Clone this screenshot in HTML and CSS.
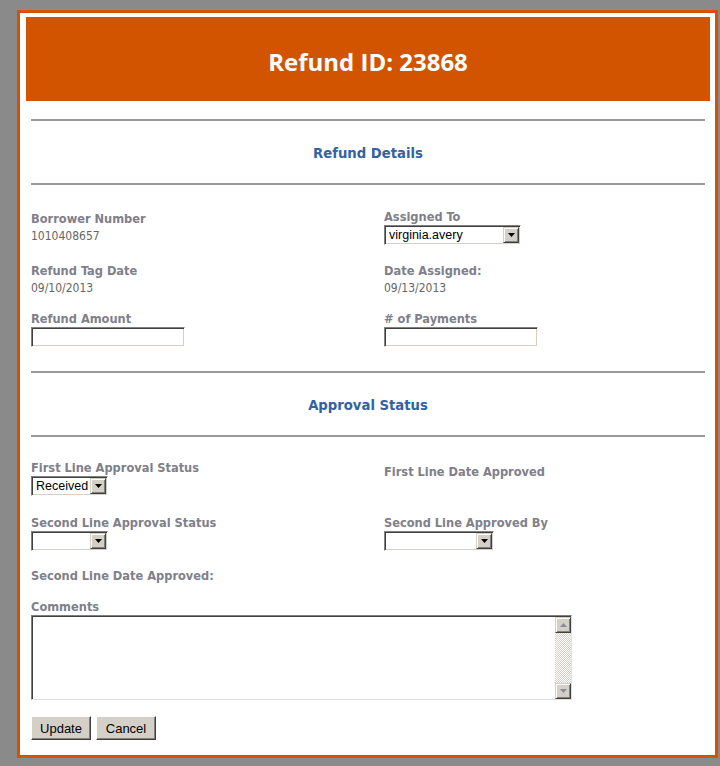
FILE: index.html
```html
<!DOCTYPE html>
<html>
<head>
<meta charset="utf-8">
<title>Refund ID: 23868</title>
<link rel="stylesheet" href="styles.css">
</head>
<body>
<div class="frame">
  <div class="header">Refund ID: 23868</div>
  <div class="content">
    <div class="section">
      <div class="rule"></div>
      <h2 class="section-title">Refund Details</h2>
      <div class="rule"></div>
    </div>

    <div class="row row1">
      <div class="cell">
        <div class="label">Borrower Number</div>
        <div class="value">1010408657</div>
      </div>
      <div class="cell">
        <div class="label">Assigned To</div>
        <div class="sel sel-assigned"><span class="sel-text">virginia.avery</span><span class="sel-btn"><svg width="7" height="4" viewBox="0 0 7 4"><polygon points="0,0 7,0 3.5,4" fill="#000"/></svg></span></div>
      </div>
    </div>

    <div class="row row2">
      <div class="cell">
        <div class="label">Refund Tag Date</div>
        <div class="value">09/10/2013</div>
      </div>
      <div class="cell">
        <div class="label">Date Assigned:</div>
        <div class="value">09/13/2013</div>
      </div>
    </div>

    <div class="row row3">
      <div class="cell">
        <div class="label">Refund Amount</div>
        <div class="inp"></div>
      </div>
      <div class="cell">
        <div class="label"># of Payments</div>
        <div class="inp"></div>
      </div>
    </div>

    <div class="section section2">
      <div class="rule"></div>
      <h2 class="section-title">Approval Status</h2>
      <div class="rule"></div>
    </div>

    <div class="row row4">
      <div class="cell">
        <div class="label">First Line Approval Status</div>
        <div class="sel sel-small"><span class="sel-text">Received</span><span class="sel-btn"><svg width="7" height="4" viewBox="0 0 7 4"><polygon points="0,0 7,0 3.5,4" fill="#000"/></svg></span></div>
      </div>
      <div class="cell cell-top">
        <div class="label">First Line Date Approved</div>
      </div>
    </div>

    <div class="row row5">
      <div class="cell">
        <div class="label">Second Line Approval Status</div>
        <div class="sel sel-small"><span class="sel-text"></span><span class="sel-btn"><svg width="7" height="4" viewBox="0 0 7 4"><polygon points="0,0 7,0 3.5,4" fill="#000"/></svg></span></div>
      </div>
      <div class="cell">
        <div class="label">Second Line Approved By</div>
        <div class="sel sel-mid"><span class="sel-text"></span><span class="sel-btn"><svg width="7" height="4" viewBox="0 0 7 4"><polygon points="0,0 7,0 3.5,4" fill="#000"/></svg></span></div>
      </div>
    </div>

    <div class="row6">
      <div class="label">Second Line Date Approved:</div>
    </div>

    <div class="comments">
      <div class="label">Comments</div>
      <div class="textbox">
        <textarea class="textarea"></textarea>
        <div class="scrollbar">
          <div class="sb-btn"><svg width="7" height="4" viewBox="0 0 7 4"><polygon points="0,4 7,4 3.5,0" fill="#8c8c94"/></svg></div>
          <div class="sb-track"></div>
          <div class="sb-btn"><svg width="7" height="4" viewBox="0 0 7 4"><polygon points="0,0 7,0 3.5,4" fill="#8c8c94"/></svg></div>
        </div>
      </div>
    </div>

    <div class="buttons">
      <button class="btn" type="button">Update</button>
      <button class="btn" type="button">Cancel</button>
    </div>
  </div>
</div>
</body>
</html>
```

FILE: styles.css
```css
html, body {
  margin: 0;
  padding: 0;
}
body {
  background: #8a8a8a;
  width: 720px;
  height: 766px;
  overflow: hidden;
}
.frame {
  margin: 10px 0 0 17px;
  border: 3px solid #d35400;
  background: #fff;
  padding: 4px 5px 15px 6px;
  box-sizing: content-box;
  width: 684px;
}
.header {
  height: 84px;
  box-sizing: border-box;
  padding-top: 5px;
  line-height: 79px;
  background: #d35400;
  color: #fff;
  text-align: center;
  font-family: "Open Sans", sans-serif;
  font-weight: 700;
  font-size: 24px;
}
.content {
  padding: 0 5px;
}
.section {
  margin-top: 18px;
}
.section2 {
  margin-top: 24px;
}
.rule {
  height: 2px;
  background: #9a9a9a;
}
.section-title {
  margin: 22px 0;
  height: 18px;
  line-height: 18px;
  padding-top: 1px;
  margin-bottom: 21px;
  text-align: center;
  font-family: "DejaVu Sans Condensed", "DejaVu Sans", sans-serif;
  font-weight: 700;
  font-size: 14.7px;
  color: #3262a2;
}
.row {
  display: grid;
  grid-template-columns: 353px 1fr;
  align-items: center;
}
.row1 { margin-top: 23px; }
.row2 { margin-top: 17px; }
.row3 { margin-top: 14px; }
.row4 { margin-top: 22px; }
.row5 { margin-top: 18px; }
.row6 { margin-top: 16px; }
.comments { margin-top: 14px; }
.cell-top {
  align-self: start;
  padding-top: 4px;
}
.label {
  font-family: "DejaVu Sans Condensed", "DejaVu Sans", sans-serif;
  font-weight: 700;
  font-size: 12.7px;
  line-height: 17px;
  color: #80808a;
}
.value {
  font-family: "DejaVu Sans Condensed", "DejaVu Sans", sans-serif;
  font-size: 12px;
  line-height: 17px;
  padding-top: 1px;
  height: 16px;
  color: #666666;
}
.sel, .inp {
  box-sizing: border-box;
  height: 20px;
  border: 1px solid;
  border-color: #808080 #fff #fff #808080;
  box-shadow: inset 1px 1px 0 #404040, inset -1px -1px 0 #d4d0c8;
  background: #fff;
}
.sel {
  display: flex;
  align-items: stretch;
  padding: 1px;
}
.sel-assigned { width: 137px; }
.sel-small { width: 77px; }
.sel-mid { width: 110px; }
.inp { width: 154px; }
.sel-text {
  flex: 1;
  padding-left: 3px;
  font-family: "Liberation Sans", Arial, sans-serif;
  font-size: 12.5px;
  line-height: 16px;
  color: #000;
  white-space: nowrap;
  overflow: hidden;
}
.sel-btn {
  width: 16px;
  box-sizing: border-box;
  background: #d4d0c8;
  border: 1px solid;
  border-color: #d4d0c8 #404040 #404040 #d4d0c8;
  box-shadow: inset 1px 1px 0 #fff, inset -1px -1px 0 #808080;
  display: flex;
  align-items: center;
  justify-content: center;
}
.textbox {
  box-sizing: border-box;
  width: 541px;
  height: 85px;
  border: 1px solid;
  border-color: #808080 #e0e0e0 #e0e0e0 #808080;
  box-shadow: inset 1px 1px 0 #404040;
  padding: 1px 0 0 1px;
  display: flex;
  background: #fff;
}
.textarea {
  flex: 1;
  border: 0;
  margin: 0;
  padding: 2px;
  resize: none;
  outline: none;
  background: transparent;
  font-family: "Liberation Sans", Arial, sans-serif;
  font-size: 13px;
}
.scrollbar {
  width: 16px;
  display: flex;
  flex-direction: column;
}
.sb-btn {
  height: 16px;
  box-sizing: border-box;
  background: #d4d0c8;
  border: 1px solid;
  border-color: #d4d0c8 #404040 #404040 #d4d0c8;
  box-shadow: inset 1px 1px 0 #fff, inset -1px -1px 0 #808080;
  display: flex;
  align-items: center;
  justify-content: center;
}
.sb-track {
  flex: 1;
  background: repeating-conic-gradient(#d4d0c8 0 25%, #fff 0 50%) 0 0 / 2px 2px;
}
.buttons {
  margin-top: 16px;
  display: flex;
  gap: 5px;
}
.btn {
  width: 60px;
  height: 24px;
  margin: 0;
  padding: 0;
  background: #d4d0c8;
  border: 1px solid;
  border-color: #fff #404040 #404040 #fff;
  box-shadow: inset -1px -1px 0 #808080;
  font-family: "Liberation Sans", Arial, sans-serif;
  font-size: 13px;
  color: #000;
}
```
